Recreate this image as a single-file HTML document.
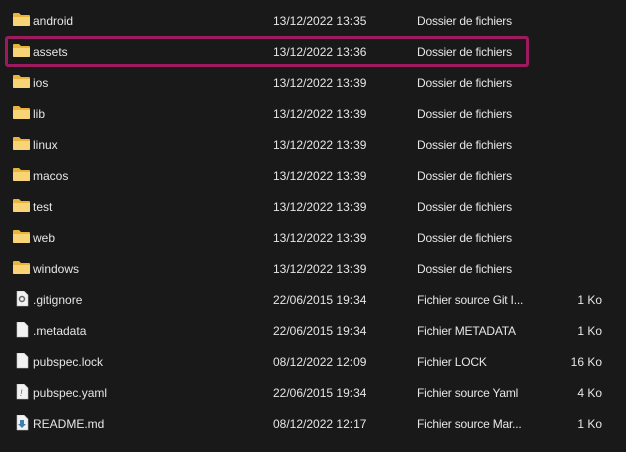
<!DOCTYPE html>
<html><head><meta charset="utf-8"><style>
body{margin:0;width:626px;height:452px;background:#191919;font-family:"Liberation Sans","DejaVu Sans",sans-serif;font-size:12px;color:#e6e6e6;position:relative;overflow:hidden}
.r{position:absolute;left:0;width:626px;height:20px;line-height:20px}
.r span{position:absolute;top:1px;white-space:nowrap}
.n{left:33px}.d{left:273px}.t{left:417px;letter-spacing:-0.2px}.s{right:24px}
.ic{position:absolute;left:13px;top:2px}
.box{position:absolute;left:5px;top:36px;width:518px;height:25px;border:3px solid #9e1a5e;border-radius:3px}
</style></head><body>
<div class="box"></div>
<svg width="0" height="0" style="position:absolute"><defs>
<g id="f"><path d="M0 2 Q0 1 1 1 H6 L8 3 H16 Q17 3 17 4 V13 Q17 14 16 14 H1 Q0 14 0 13Z" fill="#e8b43c"/><path d="M0 5 H17 V13 Q17 14 16 14 H1 Q0 14 0 13Z" fill="#f8d476"/></g>
<g id="p"><path d="M1 0 H8 L12 4 V15 H1Z" fill="#f2f2f2" stroke="#bbb" stroke-width=".6"/></g>
</defs></svg>
<div class="r" style="top:10px"><svg class="ic" width="18" height="16"><use href="#f"/></svg><span class="n">android</span><span class="d">13/12/2022 13:35</span><span class="t">Dossier de fichiers</span></div>
<div class="r" style="top:41px"><svg class="ic" width="18" height="16"><use href="#f"/></svg><span class="n">assets</span><span class="d">13/12/2022 13:36</span><span class="t">Dossier de fichiers</span></div>
<div class="r" style="top:72px"><svg class="ic" width="18" height="16"><use href="#f"/></svg><span class="n">ios</span><span class="d">13/12/2022 13:39</span><span class="t">Dossier de fichiers</span></div>
<div class="r" style="top:103px"><svg class="ic" width="18" height="16"><use href="#f"/></svg><span class="n">lib</span><span class="d">13/12/2022 13:39</span><span class="t">Dossier de fichiers</span></div>
<div class="r" style="top:134px"><svg class="ic" width="18" height="16"><use href="#f"/></svg><span class="n">linux</span><span class="d">13/12/2022 13:39</span><span class="t">Dossier de fichiers</span></div>
<div class="r" style="top:165px"><svg class="ic" width="18" height="16"><use href="#f"/></svg><span class="n">macos</span><span class="d">13/12/2022 13:39</span><span class="t">Dossier de fichiers</span></div>
<div class="r" style="top:196px"><svg class="ic" width="18" height="16"><use href="#f"/></svg><span class="n">test</span><span class="d">13/12/2022 13:39</span><span class="t">Dossier de fichiers</span></div>
<div class="r" style="top:227px"><svg class="ic" width="18" height="16"><use href="#f"/></svg><span class="n">web</span><span class="d">13/12/2022 13:39</span><span class="t">Dossier de fichiers</span></div>
<div class="r" style="top:258px"><svg class="ic" width="18" height="16"><use href="#f"/></svg><span class="n">windows</span><span class="d">13/12/2022 13:39</span><span class="t">Dossier de fichiers</span></div>
<div class="r" style="top:289px"><svg class="ic" style="left:16px" width="14" height="16"><use href="#p"/><circle cx="6" cy="8" r="2.5" fill="none" stroke="#666" stroke-width="1.5"/></svg><span class="n">.gitignore</span><span class="d">22/06/2015 19:34</span><span class="t">Fichier source Git I...</span><span class="s">1 Ko</span></div>
<div class="r" style="top:320px"><svg class="ic" style="left:16px" width="14" height="16"><use href="#p"/></svg><span class="n">.metadata</span><span class="d">22/06/2015 19:34</span><span class="t">Fichier METADATA</span><span class="s">1 Ko</span></div>
<div class="r" style="top:351px"><svg class="ic" style="left:16px" width="14" height="16"><use href="#p"/></svg><span class="n">pubspec.lock</span><span class="d">08/12/2022 12:09</span><span class="t">Fichier LOCK</span><span class="s">16 Ko</span></div>
<div class="r" style="top:382px"><svg class="ic" style="left:16px" width="14" height="16"><use href="#p"/><text x="4" y="12" font-size="9" fill="#8a4f8a" font-style="italic">!</text></svg><span class="n">pubspec.yaml</span><span class="d">22/06/2015 19:34</span><span class="t">Fichier source Yaml</span><span class="s">4 Ko</span></div>
<div class="r" style="top:413px"><svg class="ic" style="left:16px" width="14" height="16"><use href="#p"/><path d="M4 5 H8 V9 H10 L6 13 L2 9 H4Z" fill="#3f7fb0"/></svg><span class="n">README.md</span><span class="d">08/12/2022 12:17</span><span class="t">Fichier source Mar...</span><span class="s">1 Ko</span></div>
</body></html>
